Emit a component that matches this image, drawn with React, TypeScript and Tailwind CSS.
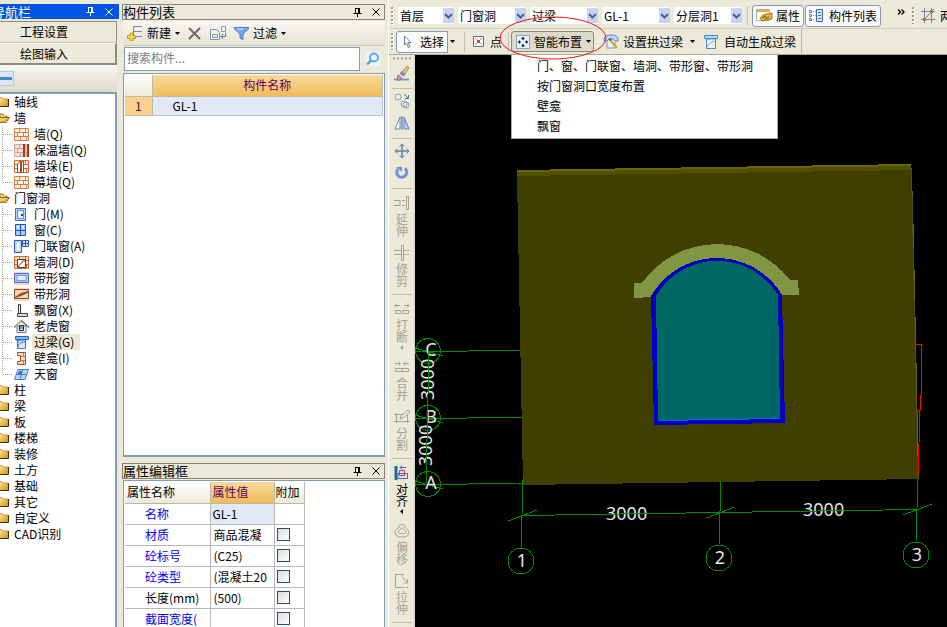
import type { ReactNode } from "react";

/* ---------- small shared pieces ---------- */

function Svg({ w = 16, h = 16, children }: { w?: number; h?: number; children: ReactNode }) {
  return (
    <svg width={w} height={h} viewBox={`0 0 ${w} ${h}`} fill="none" className="shrink-0" aria-hidden="true">
      {children}
    </svg>
  );
}

function Caret() {
  return (
    <Svg w={5} h={3}>
      <path d="M0 0h5L2.5 3z" fill="#000" />
    </Svg>
  );
}

function Pin() {
  return (
    <Svg w={9} h={9}>
      <path d="M2.5 0v5M2 .5h4.500M.5 5.500h8M4.500 6v3" stroke="currentColor" />
      <path d="M5 0h2v5H5z" fill="currentColor" />
    </Svg>
  );
}

function Cross() {
  return (
    <Svg w={8} h={8}>
      <path d="M.5.5l7 7M7.500.5l-7 7" stroke="currentColor" />
    </Svg>
  );
}

function Grip() {
  return (
    <Svg w={3} h={18}>
      <path d="M2 1v17" stroke="#fff" strokeWidth="2" strokeDasharray="2 2" />
      <path d="M1 0v17" stroke="#a5a291" strokeWidth="2" strokeDasharray="2 2" />
    </Svg>
  );
}

function Divider() {
  return <span className="h-5 w-px shrink-0 bg-[#c5c2ad]" />;
}

/* ---------- navigation tree ---------- */

function Folder({ open }: { open?: boolean }) {
  return (
    <Svg w={10} h={12}>
      <defs>
        <linearGradient id="folder" x1="0" y1="0" x2="1" y2="1">
          <stop stopColor="#ffe9a0" />
          <stop offset="1" stopColor="#d9930f" />
        </linearGradient>
      </defs>
      {open ? (
        <>
          <path d="M0 2h3l1 2h3v3H0z" fill="#f6cf65" stroke="#8a6a1c" strokeWidth=".8" />
          <path d="M-2 5.500H9.500L6 10.500H-2z" fill="url(#folder)" stroke="#6d4d08" strokeWidth=".8" />
        </>
      ) : (
        <>
          <path d="M-1 1.500h3l1 1.500h5v7.500H-1z" fill="url(#folder)" stroke="#b58a2a" strokeWidth=".8" />
          <path d="M0 10.500h8.500V3" stroke="#3f2d05" />
        </>
      )}
    </Svg>
  );
}

function Connector({ last }: { last: boolean }) {
  return (
    <Svg w={14} h={16}>
      <path d={last ? "M2.500 0v8" : "M2.500 0v16"} stroke="#a8a48c" strokeDasharray="1 1" />
      <path d="M3 8.500h10" stroke="#a8a48c" strokeDasharray="1 1" />
    </Svg>
  );
}

const bricks = "M.5.5h14v12H.5zM1 4.500h13M1 8.500h13M5.500 1v3M11.500 1v3M3.500 5v3M9.500 5v3M6.500 9v3M12.500 9v3";

const treeIcons: Record<string, ReactNode> = {
  wall: <path d={bricks} fill="#fff0df" stroke="#d07f52" />,
  insulated: (
    <>
      <path d={bricks} fill="#f8dcd8" stroke="#d3a29b" />
      <path d="M9 0h2v13H9zM13 0h2v13h-2z" fill="#9c3c1c" />
      <path d="M12 0v13" stroke="#f3b58a" />
    </>
  ),
  pier: (
    <>
      <path d={bricks} fill="#fff0df" stroke="#c96f3e" />
      <path d="M3.500 3.500l3-2v11h-3zM7.500 1.500h2v11h-2z" fill="#fff" stroke="#a8481c" />
    </>
  ),
  door: (
    <>
      <path d="M1.500 .5h10v12h-10z" fill="#bcd7fb" stroke="#3a6cc4" />
      <path d="M3.500 2.500h6v8h-6z" fill="#eaf4ff" stroke="#5a8ddb" />
      <path d="M7 6h2v2H7z" fill="#1d3f8c" />
    </>
  ),
  window: (
    <>
      <path d="M1.500 .5h10v11h-10z" fill="#a9ccfb" stroke="#1b57c4" />
      <path d="M6.500 1v10M2 6.500h9" stroke="#1b57c4" />
      <path d="M3 2h2v2H3zM8 2h2v2H8z" fill="#eaf5ff" />
    </>
  ),
  doorWindow: (
    <>
      <path d="M.5.5h7v12h-7z" fill="#c6dcfb" stroke="#2458b8" />
      <path d="M8.500.5h6v6h-6zM11.500 1v5M9 3.500h5" fill="#d5e7ff" stroke="#2458b8" />
      <path d="M3 3h2v7H3z" fill="#fff" />
    </>
  ),
  opening: (
    <>
      <path d={bricks} fill="#fbd9c0" stroke="#c96f3e" />
      <path d="M3.500 3.500h8v8h-8z" fill="#fff" stroke="#6e3515" />
      <path d="M4 11l5-6h2" stroke="#6e3515" />
    </>
  ),
  stripWindow: (
    <>
      <path d="M0 0h15v2H0zM0 11h15v2H0z" fill="#fbd2c4" />
      <path d="M.5 1.500h14v9H.5z" fill="#a9c8fa" stroke="#4a6fd0" />
      <path d="M3 3.500h9v5H3z" fill="#e3f0ff" stroke="#6f9be6" />
    </>
  ),
  stripOpening: (
    <>
      <path d="M0 0h15v2H0zM0 11h15v2H0z" fill="#fbd2c4" />
      <path d="M.5 1.500h14v9H.5z" fill="#f3d7b8" stroke="#8a4a20" />
      <path d="M1 9l6-4 7-2v2L7 8l-6 2z" fill="#97501f" />
    </>
  ),
  bay: (
    <>
      <path d="M4.500.5h2v9h-2z" fill="#fff" stroke="#333" />
      <path d="M3.500 9.500h10v3h-10z" fill="#d9d9d9" stroke="#444" />
    </>
  ),
  dormer: (
    <>
      <path d="M3 6h9v6.500H3z" fill="#e3eefc" stroke="#5e7891" />
      <path d="M0 7.500L7.500.8 15 7.500" stroke="#54718c" strokeWidth="1.500" />
      <path d="M1 6.500L7.500 1" stroke="#e0c01e" />
      <path d="M5.500 5.500h4v5h-4zM6 8h3" stroke="#222" />
    </>
  ),
  lintel: (
    <>
      <path d="M1.500.5h13v3h-13z" fill="#7eb6ef" stroke="#2f66b0" />
      <path d="M3.500 4h8v8.500h-8z" fill="#d4e7fb" stroke="#3f74ba" />
      <path d="M4 11c0-3 3-5 7-5" stroke="#3f74ba" />
      <path d="M2 4h4L4 7z" fill="#4c88d0" />
    </>
  ),
  niche: (
    <>
      <path d="M3.500.5h8v12h-8V9.500h3v-6h-3z" fill="#fae0c8" stroke="#a8501c" />
      <path d="M7 4.500h4M7 8.500h4M9.500 1v3M9.500 9v3" stroke="#c97b45" />
    </>
  ),
  skylight: (
    <>
      <path d="M4 1.500h10.500L11 11.500H.5z" fill="#b9d6fa" stroke="#4778c8" />
      <path d="M8.500 2L6 11M2.500 6.500h10" stroke="#4778c8" />
      <path d="M5 3h3l-1 3H4z" fill="#2f6bd0" />
    </>
  ),
};

type TreeItem = { label: string; icon: string; selected?: boolean };
type TreeGroup = { label: string; items?: TreeItem[] };

const tree: TreeGroup[] = [
  { label: "轴线" },
  {
    label: "墙",
    items: [
      { label: "墙(Q)", icon: "wall" },
      { label: "保温墙(Q)", icon: "insulated" },
      { label: "墙垛(E)", icon: "pier" },
      { label: "幕墙(Q)", icon: "wall" },
    ],
  },
  {
    label: "门窗洞",
    items: [
      { label: "门(M)", icon: "door" },
      { label: "窗(C)", icon: "window" },
      { label: "门联窗(A)", icon: "doorWindow" },
      { label: "墙洞(D)", icon: "opening" },
      { label: "带形窗", icon: "stripWindow" },
      { label: "带形洞", icon: "stripOpening" },
      { label: "飘窗(X)", icon: "bay" },
      { label: "老虎窗", icon: "dormer" },
      { label: "过梁(G)", icon: "lintel", selected: true },
      { label: "壁龛(I)", icon: "niche" },
      { label: "天窗", icon: "skylight" },
    ],
  },
  { label: "柱" },
  { label: "梁" },
  { label: "板" },
  { label: "楼梯" },
  { label: "装修" },
  { label: "土方" },
  { label: "基础" },
  { label: "其它" },
  { label: "自定义" },
  { label: "CAD识别" },
];

function NavPanel() {
  return (
    <nav className="flex w-[119px] shrink-0 flex-col pt-1">
      <header className="flex h-[15px] items-center bg-[#0054e3] text-[13px] text-white">
        <span className="-ml-2">导航栏</span>
        <button className="ml-auto" aria-label="固定"><Pin /></button>
        <button className="mr-[6px] ml-[10px]" aria-label="关闭"><Cross /></button>
      </header>
      <button className="mt-[2px] mr-[2px] h-[22px] border-t border-r border-b border-t-[#8c8a7c] border-r-[#8c8a7c] border-b-[#c5c2b3] bg-[#ece9d8] pl-5 text-left">
        工程设置
      </button>
      <button className="mr-[2px] h-[22px] border-t border-r-2 border-b-2 border-t-white border-r-[#8c8a7c] border-b-[#8c8a7c] bg-[#ece9d8] pl-5 text-left">
        绘图输入
      </button>
      <div className="mr-[2px] flex h-[27px] items-center bg-linear-to-b from-[#f7f6f2] to-[#dedbca]">
        <button className="flex h-[15px] w-[14px] items-center border border-l-0 border-[#b3c5ec] bg-[#dde6f8]" aria-label="折叠">
          <span className="h-[3px] w-3 bg-[#3c8cc8]" />
        </button>
      </div>
      <ul className="mr-[2px] flex-1 overflow-hidden border-t-2 border-r-2 border-[#7f9db9] bg-white leading-4">
        {tree.map((group) => (
          <li key={group.label}>
            <div className="flex h-4 items-center gap-1">
              <Folder open={!!group.items} />
              <span>{group.label}</span>
            </div>
            {group.items && (
              <ul>
                {group.items.map((item, i) => (
                  <li key={item.label} className="flex h-4 items-center whitespace-nowrap">
                    <Connector last={i === group.items!.length - 1} />
                    <Svg w={15} h={13}>{treeIcons[item.icon]}</Svg>
                    <span className={item.selected ? "ml-[3px] bg-[#ece9d8] pr-[6px] pl-[2px]" : "ml-[3px] pl-[2px]"}>
                      {item.label}
                    </span>
                  </li>
                ))}
              </ul>
            )}
          </li>
        ))}
      </ul>
    </nav>
  );
}

/* ---------- component list + properties ---------- */

function PanelTitle({ children }: { children: ReactNode }) {
  return (
    <header className="-ml-px flex h-4 shrink-0 items-center border border-[#85837a] text-[13px]">
      <h2>{children}</h2>
      <button className="ml-auto" aria-label="固定"><Pin /></button>
      <button className="mr-1 ml-[10px]" aria-label="关闭"><Cross /></button>
    </header>
  );
}

type Prop = { name: string; value: string; check?: boolean; plain?: boolean };

const props: Prop[] = [
  { name: "名称", value: "GL-1" },
  { name: "材质", value: "商品混凝", check: true },
  { name: "砼标号", value: "(C25)", check: true },
  { name: "砼类型", value: "(混凝土20", check: true },
  { name: "长度(mm)", value: "(500)", check: true, plain: true },
  { name: "截面宽度(", value: "", check: true },
];

function ListPanel() {
  return (
    <section className="flex w-[263px] shrink-0 flex-col pt-1 pl-px">
      <PanelTitle>构件列表</PanelTitle>
      <div className="mt-px flex h-[25px] shrink-0 items-center border-b border-[#c9c6b5] bg-linear-to-b from-[#f8f7f2] to-[#e6e3d3] pl-1">
        <button className="flex items-center gap-1">
          <Svg w={16} h={16}>
            <path d="M6 1.500h9M6 6.500h9M6 11.500h9M6.500 1v11" stroke="#6f8ea9" />
            <path d="M3 8h3v2.500h2.500v3H6V16H3v-2.500H.5v-3H3z" fill="#f6d34e" stroke="#b48a17" strokeWidth=".8" />
          </Svg>
          新建
          <Caret />
        </button>
        <button className="ml-2" aria-label="删除">
          <Svg w={13} h={13}>
            <path d="M1 1l11 11M12 1L1 12" stroke="#6b6b6b" strokeWidth="2" />
          </Svg>
        </button>
        <button className="ml-[9px]" aria-label="复制">
          <Svg w={17} h={14}>
            <path d="M.5 3.500h6l3 3v7h-9z" fill="#eef2f7" stroke="#8696a8" />
            <path d="M2.500 8.500h5v3h-5z" stroke="#8696a8" />
            <path d="M11.500.5h4v5h-4z" fill="#fff" stroke="#8696a8" />
            <path d="M15.500 7v3.500h-4M13 8l-2 2.500 2 2.500" stroke="#3b6fd0" />
          </Svg>
        </button>
        <button className="ml-[7px] flex items-center gap-1">
          <Svg w={15} h={13}>
            <path d="M.5 .5h14v1.500L9 7v5.500l-3-1.500V7L.5 2z" fill="#78a7ee" stroke="#4a78c8" />
            <path d="M3 2h6" stroke="#d7e7ff" />
          </Svg>
          过滤
          <Caret />
        </button>
      </div>
      <div className="flex h-[26px] shrink-0 items-center">
        <input
          type="text"
          aria-label="搜索构件"
          placeholder="搜索构件..."
          className="ml-px h-6 w-[236px] border border-[#7f9db9] bg-white px-[2px] pb-1 placeholder:text-[#7b7b7b]"
        />
        <button className="ml-[6px] bg-[#eef6fc]" aria-label="搜索">
          <Svg w={14} h={14}>
            <circle cx="8" cy="5.500" r="4" stroke="#58a9e6" strokeWidth="2" />
            <path d="M5 8.500L1 12.500" stroke="#58a9e6" strokeWidth="2.500" />
          </Svg>
        </button>
      </div>
      <div className="mt-px flex-1 border border-b-2 border-[#7f9db9] bg-white p-px">
        <table className="w-full table-fixed border-collapse">
          <thead>
            <tr className="h-[21px]">
              <th className="w-[27px] border-r border-b border-[#bdb9a7] bg-linear-to-b from-white to-[#ece9d8]" />
              <th className="border-r border-b border-[#bdb9a7] bg-linear-to-b from-[#f9d999] to-[#f0bc58] font-normal text-[#600058]">
                构件名称
              </th>
            </tr>
          </thead>
          <tbody>
            <tr className="h-[19px]">
              <td className="border-r border-b border-[#bdb9a7] bg-[#fbd28a] text-center text-[#600058]">1</td>
              <td className="border-r border-b border-[#b9bfc9] bg-[#e0e9f5] pl-5">GL-1</td>
            </tr>
          </tbody>
        </table>
      </div>

      <div className="mt-[6px] flex h-[164px] shrink-0 flex-col">
        <PanelTitle>属性编辑框</PanelTitle>
        <div className="mt-px flex-1 border border-b-0 border-[#7f9db9] bg-white p-px">
          <table className="w-[180px] table-fixed border-collapse whitespace-nowrap">
            <thead>
              <tr className="h-[21px] bg-linear-to-b from-white to-[#ece9d8] text-left">
                <th className="w-[85px] border-r border-b border-[#bdb9a7] pl-[2px] font-normal">属性名称</th>
                <th className="w-[64px] border-r border-b border-[#bdb9a7] bg-linear-to-b from-[#f9d999] to-[#f0bc58] pl-[2px] font-normal text-[#600058]">
                  属性值
                </th>
                <th className="border-r border-b border-[#bdb9a7] pl-px font-normal">附加</th>
              </tr>
            </thead>
            <tbody>
              {props.map((p, i) => (
                <tr key={p.name} className="h-[21px]">
                  <td className={p.plain ? "border-r border-b border-[#b8b8b8] pl-5" : "border-r border-b border-[#b8b8b8] pl-5 text-[#0000f0]"}>
                    {p.name}
                  </td>
                  <td className={i === 0 ? "border-r border-b border-[#b8b8b8] bg-[#e0e9f5] pl-[2px]" : "border-r border-b border-[#b8b8b8] pl-[3px]"}>
                    {p.value}
                  </td>
                  <td className="border-r border-b border-[#b8b8b8]">
                    {p.check && (
                      <input
                        type="checkbox"
                        aria-label={p.name}
                        className="ml-[2px] block size-[13px] appearance-none border border-[#1c5180] bg-linear-to-br from-[#dcdcd7] to-white"
                      />
                    )}
                  </td>
                </tr>
              ))}
            </tbody>
          </table>
        </div>
      </div>
    </section>
  );
}

/* ---------- top toolbars ---------- */

function Combo({ label, value, narrow }: { label: string; value: string; narrow?: boolean }) {
  return (
    <span className={narrow ? "relative h-[17px] w-14 shrink-0" : "relative h-[17px] w-[68px] shrink-0"}>
      <select aria-label={label} className="h-full w-full appearance-none bg-white pl-[2px] leading-4">
        <option>{value}</option>
      </select>
      <span className="pointer-events-none absolute top-px right-0 flex h-[15px] w-[11px] items-center justify-center bg-[#c3d3fb]">
        <Svg w={9} h={6}>
          <path d="M1 1l3.500 3.500L8 1" stroke="#4d6185" strokeWidth="2" />
        </Svg>
      </span>
    </span>
  );
}

function SelectorBar() {
  return (
    <div className="flex h-[26px] items-center overflow-hidden border-b border-[#cfccba] pl-[2px]">
      <Grip />
      <div className="ml-1 flex gap-1">
        <Combo label="楼层" value="首层" narrow />
        <Combo label="类别" value="门窗洞" />
        <Combo label="构件类型" value="过梁" />
        <Combo label="构件" value="GL-1" />
        <Combo label="分层" value="分层洞1" />
      </div>
      <span className="mx-1 flex pl-px"><Divider /></span>
      <button className="flex h-[22px] shrink-0 items-center gap-[3px] rounded-[3px] border border-[#7a9cc0] bg-[#fbfaf6] px-[3px]">
        <Svg w={17} h={15}>
          <path d="M.5 1.500h13v11H.5z" fill="#fff7e4" stroke="#b0b0a4" />
          <path d="M1 2h12v2H1z" fill="#efa64f" />
          <path d="M4 10l3-3 4-1 5-1v6l-5 1-5 1z" fill="#e3b53c" stroke="#8d6c22" strokeWidth=".8" />
          <path d="M6 10l4-2M9 11l4-2" stroke="#5f450c" />
        </Svg>
        属性
      </button>
      <button className="ml-px flex h-[22px] shrink-0 items-center gap-[6px] rounded-[3px] border border-[#7a9cc0] bg-[#fbfaf6] px-[3px]">
        <Svg w={14} h={13}>
          <path d="M.5 1.500h2v2h-2zM.5 5.500h2v2h-2zM.5 9.500h2v2h-2z" stroke="#5b7fb8" />
          <path d="M4 2.500h3M4 6.500h3M4 10.500h2" stroke="#8aa5cf" strokeDasharray="1 1" />
          <path d="M7.500.5h6v12h-6z" fill="#dbe8fa" stroke="#3f66a8" />
          <path d="M9 3.500h3M9 6.500h3M9 9.500h3" stroke="#3f66a8" />
        </Svg>
        构件列表
      </button>
      <button className="ml-auto pb-2 pl-4" aria-label="更多">
        <Svg w={8} h={6}>
          <path d="M1 .5L3.500 3 1 5.500M4.500.5L7 3 4.500 5.500" stroke="#000" strokeWidth="1.300" />
        </Svg>
      </button>
      <span className="ml-1 flex h-full w-px bg-white" />
      <span className="ml-[3px] flex"><Grip /></span>
      <button className="ml-[6px] flex w-[26px] shrink-0 items-center gap-[5px] overflow-hidden whitespace-nowrap">
        <Svg w={14} h={15}>
          <path d="M3.500 0v15M10.500 0v15M0 3.500h14M0 11.500h14" stroke="#7587a8" />
          <path d="M2 13L13 1" stroke="#d8483a" />
          <path d="M2 10h3v3H2zM9 2h3v3H9z" fill="#5c9a52" />
        </Svg>
        <span>两点</span>
      </button>
    </div>
  );
}

const layoutMenu = ["门、窗、门联窗、墙洞、带形窗、带形洞", "按门窗洞口宽度布置", "壁龛", "飘窗"];

function DrawBar() {
  return (
    <div className="flex h-[26px] items-center border-b border-[#aca899] pl-[2px] whitespace-nowrap">
      <Grip />
      <button className="ml-[2px] flex h-[22px] shrink-0 items-center gap-2 rounded-l-[3px] border border-[#7a9cc0] bg-[#fbfaf6] px-[3px] pl-[6px]">
        <Svg w={9} h={13}>
          <path d="M1.500 1v9l2-2 2 4.500 1.500-.8-2-4.200h3z" fill="#fff" stroke="#647a9b" />
        </Svg>
        选择
      </button>
      <button className="ml-[2px] flex h-5 w-[7px] items-center" aria-label="选择方式"><Caret /></button>
      <span className="ml-[7px] flex"><Divider /></span>
      <button className="ml-2 flex shrink-0 items-center gap-[6px]">
        <Svg w={11} h={11}>
          <path d="M.5.5h10v10H.5z" fill="#fff" stroke="#5b6e96" />
          <path d="M2 2l7 7M9 2L2 9" stroke="#7f93bd" />
          <path d="M4 4h3v3H4z" fill="#d94343" />
        </Svg>
        点
      </button>
      <span className="ml-[6px] flex"><Divider /></span>
      <div className="relative ml-[2px] shrink-0">
        <button className="flex h-[21px] items-center gap-1 rounded-[3px] border border-[#8d8b80] bg-[#dddacb] pr-[2px] pl-1">
          <Svg w={14} h={14}>
            <path d="M0 0h14v14H0z" fill="#e6f0fb" />
            <path d="M.5.5h13v13H.5z" stroke="#3a5d8c" strokeDasharray="1 1" />
            <path d="M7 2v3M7 9v3M2 7h3M9 7h3" stroke="#17283d" strokeWidth="1.200" />
            <path d="M5 4l2-2 2 2zM5 10l2 2 2-2zM4 5L2 7l2 2zM10 5l2 2-2 2z" fill="#17283d" />
          </Svg>
          智能布置
          <Caret />
        </button>
        <ul className="absolute top-[23px] left-0 z-10 h-[85px] w-[267px] border border-[#aca899] bg-white pt-px">
          {layoutMenu.map((item) => (
            <li key={item}>
              <button className="h-5 w-full pl-[25px] text-left">{item}</button>
            </li>
          ))}
        </ul>
        {/* highlight ring around the active command */}
        <svg width="108" height="44" className="pointer-events-none absolute -top-[15px] -left-3 z-20" aria-hidden="true">
          <ellipse cx="54" cy="22" rx="53" ry="21" fill="none" stroke="#f01818" />
        </svg>
      </div>
      <button className="ml-[9px] flex shrink-0 items-center gap-1">
        <Svg w={16} h={16}>
          <path d="M1 4c2-4 12-4 14 0v3h-3c-2-3-6-3-8 0H1z" fill="#bfdcf6" stroke="#4d86bf" />
          <path d="M4 7v7h8V8" fill="#e8f2fb" stroke="#6f9cc7" />
          <path d="M7 6l7 8" stroke="#d9a233" strokeWidth="2" />
          <path d="M6 5l2 1" stroke="#555" strokeWidth="2" />
        </Svg>
        设置拱过梁
      </button>
      <button className="ml-[6px] flex h-5 items-center px-px" aria-label="拱过梁选项"><Caret /></button>
      <button className="ml-2 flex shrink-0 items-center gap-[6px]">
        <Svg w={14} h={14}>
          <path d="M.5.5h13v3H.5z" fill="#b8dcf6" stroke="#4a8bc4" />
          <path d="M2.500 4h9v9.500h-9z" fill="#e6f3fd" stroke="#4a8bc4" />
          <path d="M3 12c1-3 4-5 8-6" stroke="#7db0dc" />
        </Svg>
        自动生成过梁
      </button>
      <span className="ml-[5px] h-full w-px bg-[#b9b6a4]" />
    </div>
  );
}

/* ---------- vertical edit toolbar ---------- */

function Tool({ name, label, more, active, children }: { name: string; label?: boolean; more?: boolean; active?: boolean; children: ReactNode }) {
  if (!label) {
    return (
      <button className="flex h-[22px] w-full shrink-0 items-center justify-center" aria-label={name}>
        <Svg>{children}</Svg>
      </button>
    );
  }
  return (
    <button className={active ? "flex w-full shrink-0 flex-col items-center pt-[5px] pb-[3px] text-black" : "flex w-full shrink-0 flex-col items-center pt-[5px] pb-[3px] text-[#a5a293]"}>
      <Svg>{children}</Svg>
      <span className="h-[26px] pt-px [writing-mode:vertical-rl]">{name}</span>
      {more && (
        <span className="flex h-2 items-center">
          <Svg w={3} h={5}>
            <path d="M3 0v5L0 2.500z" fill="currentColor" />
          </Svg>
        </span>
      )}
    </button>
  );
}

function Rule() {
  return <span className="mt-1 mb-px h-px w-5 shrink-0 bg-[#c2bfa8]" />;
}

function EditBar() {
  return (
    <div className="flex w-[26px] shrink-0 flex-col items-center overflow-hidden border-r border-[#d5d2c0]">
      <span className="flex h-[7px] shrink-0 items-center">
        <Svg w={18} h={3}>
          <path d="M0 1.500h18" stroke="#a5a291" strokeWidth="2" strokeDasharray="2 2" />
        </Svg>
      </span>
      <Tool name="删除">
        <path d="M0 14.500h15" stroke="#7d9cbd" strokeWidth="2" />
        <path d="M8 7l5-6 2 1.500L11 9z" fill="#edc967" stroke="#8f7a42" strokeWidth=".8" />
        <path d="M6.500 7.500l4 3" stroke="#6d8cc4" strokeWidth="3" />
        <path d="M4 10l4 3-2 2H3z" fill="#e58bab" stroke="#8f5870" strokeWidth=".8" />
      </Tool>
      <Rule />
      <Tool name="复制">
        <circle cx="4" cy="4" r="3" fill="#e8eef6" stroke="#8b9cb3" />
        <circle cx="10" cy="11" r="3" fill="#e8eef6" stroke="#8b9cb3" />
        <circle cx="12" cy="12" r="3" stroke="#8b9cb3" />
        <path d="M10 1l4 4M14.500 2v3.500H11" stroke="#4e73ab" />
      </Tool>
      <Tool name="镜像">
        <path d="M6 2v12H1z" fill="#fff" stroke="#5f85bd" />
        <path d="M10 2v12h5z" fill="#b9cdea" stroke="#5f85bd" />
        <path d="M8 1v14" stroke="#3f66a8" />
      </Tool>
      <Rule />
      <Tool name="移动">
        <path d="M8 2v12M2 8h12" stroke="#5b83ab" strokeWidth="1.500" />
        <path d="M5.500 3.500L8 1l2.500 2.500M5.500 12.500L8 15l2.500-2.500M3.500 5.500L1 8l2.500 2.500M12.500 5.500L15 8l-2.500 2.500" stroke="#5b83ab" />
      </Tool>
      <Tool name="旋转">
        <path d="M4 4a5 5 0 1 0 7-.5" stroke="#6c94da" strokeWidth="3" />
        <path d="M2 2h6v5z" fill="#6c94da" />
      </Tool>
      <Rule />
      <Tool name="延伸" label>
        <path d="M0 5.500h6M0 10.500h6M6 5v6M8 5.500h3M8 10.500h3M12.500 1.500h2v13h-2z" stroke="currentColor" />
      </Tool>
      <Tool name="修剪" label>
        <path d="M7.500.5h2v15h-2zM0 5.500h7M0 9.500h7" stroke="currentColor" />
        <path d="M10 5.500h6M10 9.500h6" stroke="currentColor" strokeDasharray="2 1" />
      </Tool>
      <Rule />
      <Tool name="打断" label more>
        <path d="M1.500 9.500h5v3h-5zM8.500 9.500h6v3h-6zM1 4.500h5M10 4.500h5M3 2.500l-2 2 2 2M13 2.500l2 2-2 2" stroke="currentColor" />
      </Tool>
      <Tool name="合并" label>
        <path d="M1.500 9.500h13v3h-13zM8 10v2M1 4.500h5M10 4.500h5M4.500 2.500l2 2-2 2M11.500 2.500l-2 2 2 2" stroke="currentColor" />
      </Tool>
      <Tool name="分割" label>
        <path d="M0 5.500h9M2.500 4v10M13.500 6v8M0 12.500h16" stroke="currentColor" />
        <path d="M6 10l1-3 7-6 2 2-7 6z" stroke="currentColor" />
      </Tool>
      <Rule />
      <Tool name="对齐" label more active>
        <path d="M2 1v14" stroke="#1f6d9e" strokeWidth="3" />
        <path d="M5.500 5.500h5v5h-5z" stroke="#e0332b" />
        <path d="M4 8.500h9.500v5H4z" stroke="#3f5fe0" />
        <path d="M6 2.500h6M8 .5l-2 2 2 2" stroke="#3f5fe0" />
      </Tool>
      <Tool name="偏移" label>
        <path d="M4.500 5a3.500 3.500 0 0 1 7 0c3 1 4 4 3 6-1 3-4 3-6.500 3s-5.500 0-6.500-3c-1-2 0-5 3-6z" stroke="currentColor" />
        <path d="M6.500 6.500c0-2 3-2 3 0 3 1 3 4 0 4h-3c-3 0-3-3 0-4z" stroke="currentColor" />
      </Tool>
      <Tool name="拉伸" label>
        <path d="M9 1.500v4M9 14.500h6" stroke="currentColor" strokeDasharray="2 1" />
        <path d="M9 1.500H1.500v13H9M9 5l5 5M13.500 6v4H10" stroke="currentColor" />
      </Tool>
      <Rule />
    </div>
  );
}

/* ---------- 3D view ---------- */

const axisNumbers = [
  { label: "1", x: 521, y: 561 },
  { label: "2", x: 719, y: 558 },
  { label: "3", x: 916, y: 555 },
];

const axisLetters = [
  { label: "C", y: 351 },
  { label: "B", y: 418 },
  { label: "A", y: 484 },
];

function ModelView() {
  return (
    <div className="min-w-0 flex-1 overflow-hidden bg-black">
      <svg viewBox="415 55 532 572" preserveAspectRatio="xMinYMin meet" className="h-full w-full" role="img" aria-label="模型视图">
        <g stroke="#008c00" fill="none" shapeRendering="crispEdges">
          {axisLetters.map((a) => (
            <g key={a.label}>
              <circle cx="428" cy={a.y} r="12.500" />
              <path d={`M415 ${a.y + 1}L523 ${a.y - 1}M415 ${a.y - 3}l28 8`} />
            </g>
          ))}
          {axisNumbers.map((a) => (
            <g key={a.label}>
              <circle cx={a.x} cy={a.y} r="13" />
              <path d={`M${a.x} ${a.y - 13}l2-68M${a.x - 13} ${a.y - 40}l29-11`} />
            </g>
          ))}
        </g>

        <g fill="#e4e4e4" fontFamily="'Noto Sans', 'Open Sans', sans-serif" fontSize="18">
          <text x="606" y="520">3000</text>
          <text x="803" y="516">3000</text>
          <text transform="translate(434 400) rotate(-90)">3000</text>
          <text transform="translate(432 466) rotate(-90)">3000</text>
          {axisNumbers.map((a) => (
            <text key={a.label} x={a.x + 1} y={a.y + 6} textAnchor="middle">{a.label}</text>
          ))}
          {axisLetters.map((a) => (
            <text key={a.label} x="431" y={a.y + 5} textAnchor="middle">{a.label}</text>
          ))}
        </g>

        <path d="M429 351L426 484M522 515.500L917 509.500" stroke="#008c00" shapeRendering="crispEdges" />

        <path d="M517 170L911 164L913 200L919 479L523 485z" fill="#6a6600" shapeRendering="crispEdges" />
        <path d="M517 172L911 166L912 170L918 479L523 485z" fill="#524f00" shapeRendering="crispEdges" />
        <path d="M517 176L911 170L918 479L523 485z" fill="#403e00" shapeRendering="crispEdges" />

        <path
          d="M915 344.500h6.500V377l-1 33.500H917M919.500 411l-1 64M523.500 476v6"
          stroke="#f00"
          fill="none"
          shapeRendering="crispEdges"
        />

        <g shapeRendering="crispEdges">
          <path d="M634 283h8A92 92 0 0 1 790 280h8l1 15h-17L652 297l-18 1z" fill="#809640" />
          <path d="M651 296A76 76 0 0 1 782 295L785 423L654 425z" fill="#0000bc" />
          <path d="M656 296A71 71 0 0 1 778 295L780 419L658 421z" fill="#0066ff" />
          <path d="M656 296A71 71 0 0 1 778 295L780 418L658 420z" fill="#006864" />
        </g>
      </svg>
    </div>
  );
}

export default function App() {
  return (
    <div className="flex h-screen overflow-hidden bg-[#ece9d8] font-['Noto_Sans_CJK_SC',sans-serif] text-xs text-black">
      <NavPanel />
      <span className="w-[3px] shrink-0" />
      <ListPanel />
      <main className="ml-[3px] flex min-w-0 flex-1 flex-col border-l border-white pt-[3px]">
        <SelectorBar />
        <DrawBar />
        <div className="flex min-h-0 flex-1">
          <EditBar />
          <ModelView />
        </div>
      </main>
    </div>
  );
}
